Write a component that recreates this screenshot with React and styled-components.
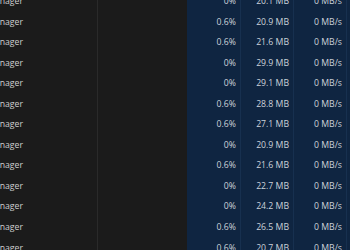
import React from "react";
import styled, { createGlobalStyle } from "styled-components";

const Global = createGlobalStyle`
  html, body { margin: 0; padding: 0; background: #1b1b1b; overflow: hidden; }
  body { font-family: "Open Sans", "Noto Sans", sans-serif; }
`;

const Viewport = styled.div`
  width: 350px;
  height: 250px;
  overflow: hidden;
  background: #1b1b1b;
`;

const Table = styled.div`
  margin-top: -9px;
  margin-left: -13px;
  display: flex;
  flex-direction: column;
`;

const Row = styled.div`
  display: grid;
  grid-template-columns: 111px 89px 54px 53px 53px 60px;
  height: 20.55px;
  font-size: 8.7px;
  line-height: 20.55px;
`;

const NameCell = styled.div`
  color: #cfcfcf;
  white-space: nowrap;
  overflow: hidden;
  border-right: 1px solid #2a2a2a;
`;

const StatusCell = styled.div`
  background: #1b1b1b;
`;

const DataCell = styled.div`
  background: #0f2541;
  color: #ccd2da;
  text-align: right;
  padding-right: ${(p) => p.$pad}px;
  border-right: 1px solid ${(p) => (p.$last ? "transparent" : "#17304f")};
  white-space: nowrap;
`;

const rows = [
  ["0%", "20.1 MB"],
  ["0.6%", "20.9 MB"],
  ["0.6%", "21.6 MB"],
  ["0%", "29.9 MB"],
  ["0%", "29.1 MB"],
  ["0.6%", "28.8 MB"],
  ["0.6%", "27.1 MB"],
  ["0%", "20.9 MB"],
  ["0.6%", "21.6 MB"],
  ["0%", "22.7 MB"],
  ["0%", "24.2 MB"],
  ["0.6%", "26.5 MB"],
  ["0.6%", "20.7 MB"],
];

export default function App() {
  return (
    <Viewport>
      <Global />
      <Table>
        {rows.map(([cpu, mem], i) => (
          <Row key={i}>
            <NameCell>Manager</NameCell>
            <StatusCell />
            <DataCell $pad={4}>{cpu}</DataCell>
            <DataCell $pad={4}>{mem}</DataCell>
            <DataCell $pad={4}>0 MB/s</DataCell>
            <DataCell $pad={4} $last>0 Mbps</DataCell>
          </Row>
        ))}
      </Table>
    </Viewport>
  );
}
